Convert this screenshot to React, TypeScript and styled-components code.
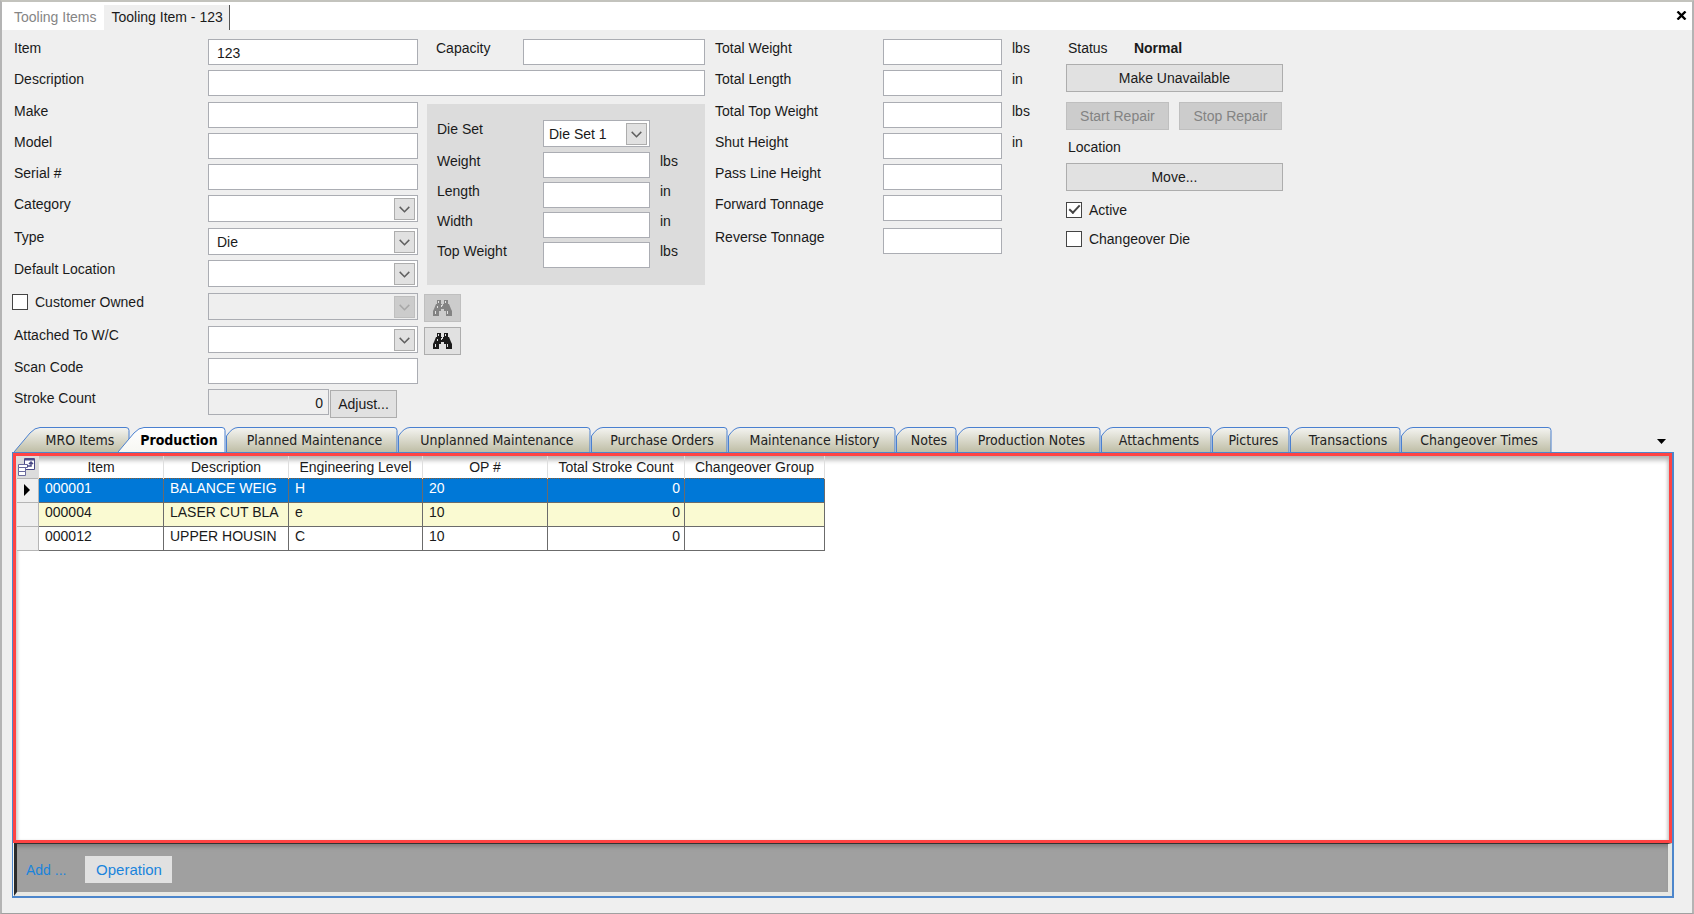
import React, { useId } from 'react';
import styled, { createGlobalStyle, css } from 'styled-components';

const GlobalStyle = createGlobalStyle`
  *, *::before, *::after { box-sizing: border-box; }
  body {
    margin: 0;
    background: #efefef;
    color: #1a1a1a;
    font: 14px/18px "Liberation Sans", Arial, sans-serif;
  }
  button, input, select { font: inherit; color: inherit; margin: 0; border-radius: 0; }
`;

const Window = styled.div`
  display: flex;
  flex-direction: column;
  min-height: 100vh;
  border: 2px solid #b4b4b4;
  border-top-color: #c3c3bd;
  border-bottom: 1px solid #a0a0a0;
`;

const DocumentBar = styled.header`
  display: flex;
  align-items: flex-end;
  justify-content: space-between;
  height: 28px;
  padding: 0 3px;
  background: #fff;
`;

const DocumentTabs = styled.nav`
  display: flex;
`;

const DocumentTab = styled.button<{ $active?: boolean }>`
  height: 25px;
  padding: 0 6px 2px 7px;
  border: 0;
  white-space: nowrap;
  background: ${(p) => (p.$active ? '#efefef' : '#fff')};
  color: ${(p) => (p.$active ? '#1a1a1a' : '#858585')};
  border-right: ${(p) => (p.$active ? '1px solid #555' : '0')};
  & + & { margin-left: 2px; }
  &:first-child { padding-left: 9px; }
`;

const CloseButton = styled.button`
  display: flex;
  align-items: center;
  padding: 0 2px 10px;
  border: 0;
  background: none;
`;

const Form = styled.form`
  display: flex;
  gap: 10px;
  padding: 9px 12px 0;
`;

const Column = styled.div``;

const Row = styled.div<{ $height?: number }>`
  display: flex;
  align-items: flex-start;
  height: ${(p) => p.$height ?? 31}px;
`;

const SpreadRow = styled(Row)`
  justify-content: space-between;
`;

const FieldGroup = styled.div`
  display: flex;
`;

const Label = styled.label<{ $width: number }>`
  flex: none;
  width: ${(p) => p.$width}px;
  white-space: nowrap;
`;

const Unit = styled.span`
  padding-left: 10px;
`;

const TextBox = styled.input<{ $width: number; $numeric?: boolean }>`
  flex: none;
  width: ${(p) => p.$width}px;
  height: 26px;
  padding: 2px 5px 1px 8px;
  border: 1px solid #abadb3;
  background: ${(p) => (p.readOnly ? '#efefef' : '#fff')};
  text-align: ${(p) => (p.$numeric ? 'right' : 'left')};
`;

const SelectFrame = styled.span<{ $width: number }>`
  position: relative;
  flex: none;
  width: ${(p) => p.$width}px;
  height: 27px;
`;

const SelectBox = styled.select<{ $compact?: boolean }>`
  appearance: none;
  display: block;
  width: 100%;
  height: 100%;
  padding: 0 24px 0 ${(p) => (p.$compact ? 5 : 8)}px;
  border: 1px solid #abadb3;
  background: #fff;
  opacity: 1;
  &:disabled { background: #efefef; }
`;

const Arrow = styled.span<{ $disabled?: boolean }>`
  position: absolute;
  top: 3px;
  right: 3px;
  display: grid;
  place-items: center;
  width: 21px;
  height: 22px;
  border: 1px solid ${(p) => (p.$disabled ? '#bfbfbf' : '#adadad')};
  background: ${(p) => (p.$disabled ? '#cccccc' : '#e1e1e1')};
  color: ${(p) => (p.$disabled ? '#a8a8a8' : '#606060')};
  pointer-events: none;
`;

const PushButton = styled.button<{ $width?: number }>`
  display: flex;
  align-items: center;
  justify-content: center;
  flex: none;
  width: ${(p) => (p.$width ? `${p.$width}px` : '100%')};
  height: 28px;
  padding: 0;
  border: 1px solid #adadad;
  background: #e1e1e1;
  &:disabled {
    border-color: #bfbfbf;
    background: #cccccc;
    color: #838383;
  }
`;

const IconButton = styled(PushButton)`
  margin: 1px 0 0 6px;
`;

const AdjustButton = styled(PushButton)`
  margin: 1px 0 0 1px;
`;

const DiePanel = styled.fieldset`
  width: 278px;
  min-width: 0;
  height: 181px;
  margin: 2px 0 0 9px;
  padding: 16px 10px 13px;
  border: 0;
  background: #dcdcdc;
`;

const Split = styled.div`
  display: flex;
`;

const StatusColumn = styled.div`
  display: flex;
  flex-direction: column;
  width: 217px;
  margin-left: 26px;
`;

const StatusLine = styled.div`
  display: flex;
  padding-left: 2px;
  margin-bottom: 7px;
  span { width: 66px; }
`;

const RepairButtons = styled.div`
  display: flex;
  gap: 10px;
  margin: 10px 0 8px;
`;

const LocationText = styled.div`
  padding: 0 2px 7px;
`;

const CheckLabel = styled.label<{ $width?: number }>`
  display: flex;
  align-items: center;
  gap: 7px;
  flex: none;
  width: ${(p) => (p.$width ? `${p.$width}px` : 'auto')};
  margin-left: ${(p) => (p.$width ? '-2px' : '0')};
  white-space: nowrap;
`;

const StatusChecks = styled.div`
  display: flex;
  flex-direction: column;
  gap: 11px;
  margin-top: 10px;
`;

const CheckBox = styled.input`
  appearance: none;
  flex: none;
  width: 16px;
  height: 16px;
  border: 1px solid #444;
  background: #fff;
  &:checked::after {
    content: '';
    display: block;
    width: 11px;
    height: 6px;
    margin: 2px 0 0 2px;
    border: solid #444;
    border-width: 0 0 2px 2px;
    transform: rotate(-47deg);
  }
`;

const TabStrip = styled.div`
  display: flex;
  align-items: flex-end;
  height: 25px;
  margin: 7px 18px 0 12px;
`;

const TabButton = styled.button<{ $width: number; $active?: boolean }>`
  position: relative;
  display: flex;
  flex: none;
  align-items: center;
  justify-content: center;
  width: ${(p) => p.$width}px;
  height: 25px;
  padding: 1px 0 0 5px;
  border: 0;
  background: none;
  color: #222;
  font: 14px/18px "DejaVu Sans Condensed", "DejaVu Sans", sans-serif;
  font-stretch: condensed;
  white-space: nowrap;
  ${(p) =>
    p.$active &&
    css`
      z-index: 1;
      margin-left: -12px;
      padding-left: 14px;
      color: #000;
      font-weight: bold;
    `}
  &:first-child { padding-left: 16px; }
  span { position: relative; }
`;

const TabShape = styled.svg`
  position: absolute;
  inset: 0;
  display: block;
`;

const OverflowButton = styled.button`
  display: flex;
  margin: 0 8px 8px auto;
  padding: 0;
  border: 0;
  background: none;
`;

const TabPanel = styled.section`
  display: flex;
  flex: 1;
  flex-direction: column;
  margin: 0 18px 15px 10px;
  border: solid #4d86cb;
  border-width: 1px 2px 2px 1px;
  background: #f4f4f0;
`;

const GridArea = styled.div`
  flex: 1;
  border: 3px solid #ff4343;
  background: #fff;
  box-shadow: inset 0 5px 5px -1px #b4b4b4, inset 3px 0 3px -1px #ddd, inset -3px 0 3px -1px #ddd;
`;

const DataTable = styled.table`
  table-layout: fixed;
  width: 808px;
  border-collapse: collapse;
`;

const HeadCell = styled.th`
  height: 22px;
  padding: 0;
  border-left: 1px solid #dedede;
  border-right: 1px solid #dedede;
  font-weight: normal;
  white-space: nowrap;
`;

const ChooserCell = styled(HeadCell)`
  background: #dcdcdc;
  svg { display: block; margin: 1px 0 0 1px; }
`;

const BodyRow = styled.tr<{ $tone: 'selected' | 'alternate' | 'plain' }>`
  background: ${(p) => ({ selected: '#0078d7', alternate: '#fafad2', plain: '#fff' })[p.$tone]};
  color: ${(p) => (p.$tone === 'selected' ? '#fff' : '#1a1a1a')};
  ${(p) =>
    p.$tone === 'selected' &&
    css`
      td { border-top: 1px dotted #8a5a2c; border-bottom: 1px dotted #2b1a0c; }
    `}
`;

const RowHeader = styled.th`
  height: 24px;
  padding: 0 0 0 7px;
  border: 1px solid #b5b5b5;
  border-left: 0;
  background: #efefef;
  svg { display: block; }
`;

const Cell = styled.td<{ $numeric?: boolean }>`
  height: 24px;
  padding: 0 4px 4px 6px;
  border: 1px solid #6b6b6b;
  text-align: ${(p) => (p.$numeric ? 'right' : 'left')};
  white-space: nowrap;
`;

const ActionBar = styled.footer`
  display: flex;
  align-items: center;
  gap: 19px;
  height: 53px;
  margin-left: 1px;
  padding: 3px 9px 0;
  border: solid;
  border-width: 1px 4px 4px 3px;
  border-color: #333 #e6e6e2 #e8e8e4 #2a2a2a;
  background: #a0a0a0;
  box-shadow: inset 0 5px 5px -3px #777;
  color: #1a84dc;
`;

const ActionButton = styled.button`
  width: 87px;
  height: 27px;
  padding: 0;
  border: 0;
  background: #e1e1e1;
  font-size: 15px;
`;

const Chevron = () => (
  <svg width="11" height="7" viewBox="0 0 11 7" fill="none" stroke="currentColor" strokeWidth="1.5">
    <path d="M.7 .9 5.5 5.7 10.3 .9" />
  </svg>
);

const Binoculars = () => (
  <svg width="19" height="17" viewBox="0 0 19 17" fill="currentColor">
    <path d="M4 0h4v4h1v2h1V4h1V0h4v4h1l2 5 1 2v5h-6v-5h-2V9H8v2H6v5H0v-5l1-2 2-5h1z" />
    <path fill="#e1e1e1" d="M5 1h1v2H5zM12 1h1v2h-1zM4 6h1v2H4zM2 11h1v3H2zM8 5h1v2H8zM14 11h1v3h-1z" />
  </svg>
);

const ChooserIcon = () => (
  <svg width="18" height="19" viewBox="0 0 18 19" fill="#fff" stroke="#4a4a86">
    <path d="M6.5.5h10v11h-10z" />
    <path fill="#4a4a86" d="M7 1h9v1H7z" />
    <path d="M.5 6.5h9v3h-9zM.5 9.5h7v4h-7zM.5 13.5h7v4h-7z" stroke="#6a6a9c" />
    <path fill="none" strokeWidth="1.5" d="M9 8h4V4M11 6l2-2 2 2" />
  </svg>
);

interface FieldProps {
  label: string;
  width?: number;
  labelWidth?: number;
  value?: string;
  unit?: string;
  height?: number;
}

function TextField({ label, width = 210, labelWidth = 194, value = '', unit, height }: FieldProps) {
  const id = useId();
  return (
    <Row $height={height}>
      <Label htmlFor={id} $width={labelWidth}>{label}</Label>
      <TextBox id={id} $width={width} defaultValue={value} />
      {unit && <Unit>{unit}</Unit>}
    </Row>
  );
}

interface SelectProps {
  id: string;
  width?: number;
  value?: string;
  disabled?: boolean;
  compact?: boolean;
  label?: string;
}

function Select({ id, width = 210, value = '', disabled, compact, label }: SelectProps) {
  return (
    <SelectFrame $width={width}>
      <SelectBox id={id} defaultValue={value} disabled={disabled} $compact={compact} aria-label={label}>
        <option value={value}>{value}</option>
      </SelectBox>
      <Arrow $disabled={disabled}><Chevron /></Arrow>
    </SelectFrame>
  );
}

function SelectField({ label, value, width, labelWidth = 194, height = 33, compact, children }: FieldProps & { compact?: boolean; children?: React.ReactNode }) {
  const id = useId();
  return (
    <Row $height={height}>
      <Label htmlFor={id} $width={labelWidth}>{label}</Label>
      <Select id={id} value={value} width={width} compact={compact} />
      {children}
    </Row>
  );
}

const tabs = [
  { name: 'MRO Items', width: 116 },
  { name: 'Production', width: 108 },
  { name: 'Planned Maintenance', width: 172 },
  { name: 'Unplanned Maintenance', width: 193 },
  { name: 'Purchase Orders', width: 137 },
  { name: 'Maintenance History', width: 168 },
  { name: 'Notes', width: 61 },
  { name: 'Production Notes', width: 144 },
  { name: 'Attachments', width: 111 },
  { name: 'Pictures', width: 78 },
  { name: 'Transactions', width: 111 },
  { name: 'Changeover Times', width: 151 },
];

function Tab({ name, width, index }: { name: string; width: number; index: number }) {
  const active = name === 'Production';
  const right = `H${width - 4}q3 0 3 3V25`;
  const outline =
    index < 2 ? `M0 25 16 6Q21 .5 26 .5${right}` : `M.5 25V9Q6 .5 12 .5${right}`;
  return (
    <TabButton type="button" role="tab" aria-selected={active} $width={width} $active={active}>
      <TabShape width={width} height="25" viewBox={`0 0 ${width} 25`} aria-hidden>
        <defs>
          <linearGradient id={`tab-${index}`} x2="0" y2="1">
            <stop offset="0" stopColor={active ? '#ffffff' : '#f4f4f1'} />
            <stop offset="1" stopColor={active ? '#f7f7f3' : '#bfbea6'} />
          </linearGradient>
        </defs>
        <path d={outline} fill={`url(#tab-${index})`} stroke="#4a80d0" />
      </TabShape>
      <span>{name}</span>
    </TabButton>
  );
}

const columns = [
  { name: 'Item', width: 125 },
  { name: 'Description', width: 125 },
  { name: 'Engineering Level', width: 134 },
  { name: 'OP #', width: 125 },
  { name: 'Total Stroke Count', width: 137 },
  { name: 'Changeover Group', width: 140 },
];

const rows = [
  ['000001', 'BALANCE WEIG', 'H', '20', '0', ''],
  ['000004', 'LASER CUT BLA', 'e', '10', '0', ''],
  ['000012', 'UPPER HOUSIN', 'C', '10', '0', ''],
];

const tones = ['selected', 'alternate', 'plain'] as const;

export default function App() {
  return (
    <Window>
      <GlobalStyle />
      <DocumentBar>
        <DocumentTabs>
          <DocumentTab type="button">Tooling Items</DocumentTab>
          <DocumentTab type="button" $active>Tooling Item - 123</DocumentTab>
        </DocumentTabs>
        <CloseButton type="button" aria-label="Close">
          <svg width="11" height="9" viewBox="0 0 11 9" stroke="#000" strokeWidth="2.4">
            <path d="M1.5 .5 9.5 8.5M9.5 .5 1.5 8.5" />
          </svg>
        </CloseButton>
      </DocumentBar>

      <Form onSubmit={(e) => e.preventDefault()}>
        <Column>
          <SpreadRow>
            <FieldGroup>
              <Label htmlFor="item" $width={194}>Item</Label>
              <TextBox id="item" $width={210} defaultValue="123" />
            </FieldGroup>
            <FieldGroup>
              <Label htmlFor="capacity" $width={87}>Capacity</Label>
              <TextBox id="capacity" $width={182} />
            </FieldGroup>
          </SpreadRow>
          <TextField label="Description" width={497} height={32} />
          <Split>
            <Column>
              <TextField label="Make" />
              <TextField label="Model" />
              <TextField label="Serial #" />
              <SelectField label="Category" />
              <SelectField label="Type" value="Die" height={32} />
              <SelectField label="Default Location" />
            </Column>
            <DiePanel aria-label="Die set">
              <SelectField label="Die Set" value="Die Set 1" labelWidth={106} width={107} height={32} compact />
              <TextField label="Weight" labelWidth={106} width={107} height={30} unit="lbs" />
              <TextField label="Length" labelWidth={106} width={107} height={30} unit="in" />
              <TextField label="Width" labelWidth={106} width={107} height={30} unit="in" />
              <TextField label="Top Weight" labelWidth={106} width={107} height={30} unit="lbs" />
            </DiePanel>
          </Split>
          <Row $height={33}>
            <CheckLabel $width={196}>
              <CheckBox type="checkbox" />
              Customer Owned
            </CheckLabel>
            <Select id="customer" label="Customer" disabled />
            <IconButton type="button" $width={37} disabled aria-label="Find customer"><Binoculars /></IconButton>
          </Row>
          <SelectField label="Attached To W/C" height={32}>
            <IconButton type="button" $width={37} aria-label="Find work center"><Binoculars /></IconButton>
          </SelectField>
          <TextField label="Scan Code" />
          <Row>
            <Label htmlFor="strokes" $width={194}>Stroke Count</Label>
            <TextBox id="strokes" $width={121} $numeric readOnly value="0" />
            <AdjustButton type="button" $width={67}>Adjust...</AdjustButton>
          </Row>
        </Column>

        <Column>
          <TextField label="Total Weight" labelWidth={168} width={119} unit="lbs" />
          <TextField label="Total Length" labelWidth={168} width={119} height={32} unit="in" />
          <TextField label="Total Top Weight" labelWidth={168} width={119} unit="lbs" />
          <TextField label="Shut Height" labelWidth={168} width={119} unit="in" />
          <TextField label="Pass Line Height" labelWidth={168} width={119} />
          <TextField label="Forward Tonnage" labelWidth={168} width={119} height={33} />
          <TextField label="Reverse Tonnage" labelWidth={168} width={119} />
        </Column>

        <StatusColumn>
          <StatusLine><span>Status</span><strong>Normal</strong></StatusLine>
          <PushButton type="button">Make Unavailable</PushButton>
          <RepairButtons>
            <PushButton type="button" $width={103} disabled>Start Repair</PushButton>
            <PushButton type="button" $width={103} disabled>Stop Repair</PushButton>
          </RepairButtons>
          <LocationText>Location</LocationText>
          <PushButton type="button">Move...</PushButton>
          <StatusChecks>
            <CheckLabel><CheckBox type="checkbox" defaultChecked />Active</CheckLabel>
            <CheckLabel><CheckBox type="checkbox" />Changeover Die</CheckLabel>
          </StatusChecks>
        </StatusColumn>
      </Form>

      <TabStrip role="tablist">
        {tabs.map((tab, i) => <Tab key={tab.name} {...tab} index={i} />)}
        <OverflowButton type="button" aria-label="More tabs">
          <svg width="9" height="5" viewBox="0 0 9 5"><path d="M0 0h9L4.5 5z" /></svg>
        </OverflowButton>
      </TabStrip>

      <TabPanel role="tabpanel">
        <GridArea>
          <DataTable>
            <colgroup>
              <col style={{ width: 22 }} />
              {columns.map((c) => <col key={c.name} style={{ width: c.width }} />)}
            </colgroup>
            <thead>
              <tr>
                <ChooserCell aria-label="Choose columns"><ChooserIcon /></ChooserCell>
                {columns.map((c) => <HeadCell key={c.name} scope="col">{c.name}</HeadCell>)}
              </tr>
            </thead>
            <tbody>
              {rows.map((row, r) => (
                <BodyRow key={row[0]} $tone={tones[r]}>
                  <RowHeader scope="row" aria-label={row[0]}>
                    {r === 0 && <svg width="6" height="12" viewBox="0 0 6 12"><path d="M0 0 6 6 0 12z" /></svg>}
                  </RowHeader>
                  {row.map((value, c) => <Cell key={c} $numeric={c === 4}>{value}</Cell>)}
                </BodyRow>
              ))}
            </tbody>
          </DataTable>
        </GridArea>
        <ActionBar>
          <span>Add ...</span>
          <ActionButton type="button">Operation</ActionButton>
        </ActionBar>
      </TabPanel>
    </Window>
  );
}
